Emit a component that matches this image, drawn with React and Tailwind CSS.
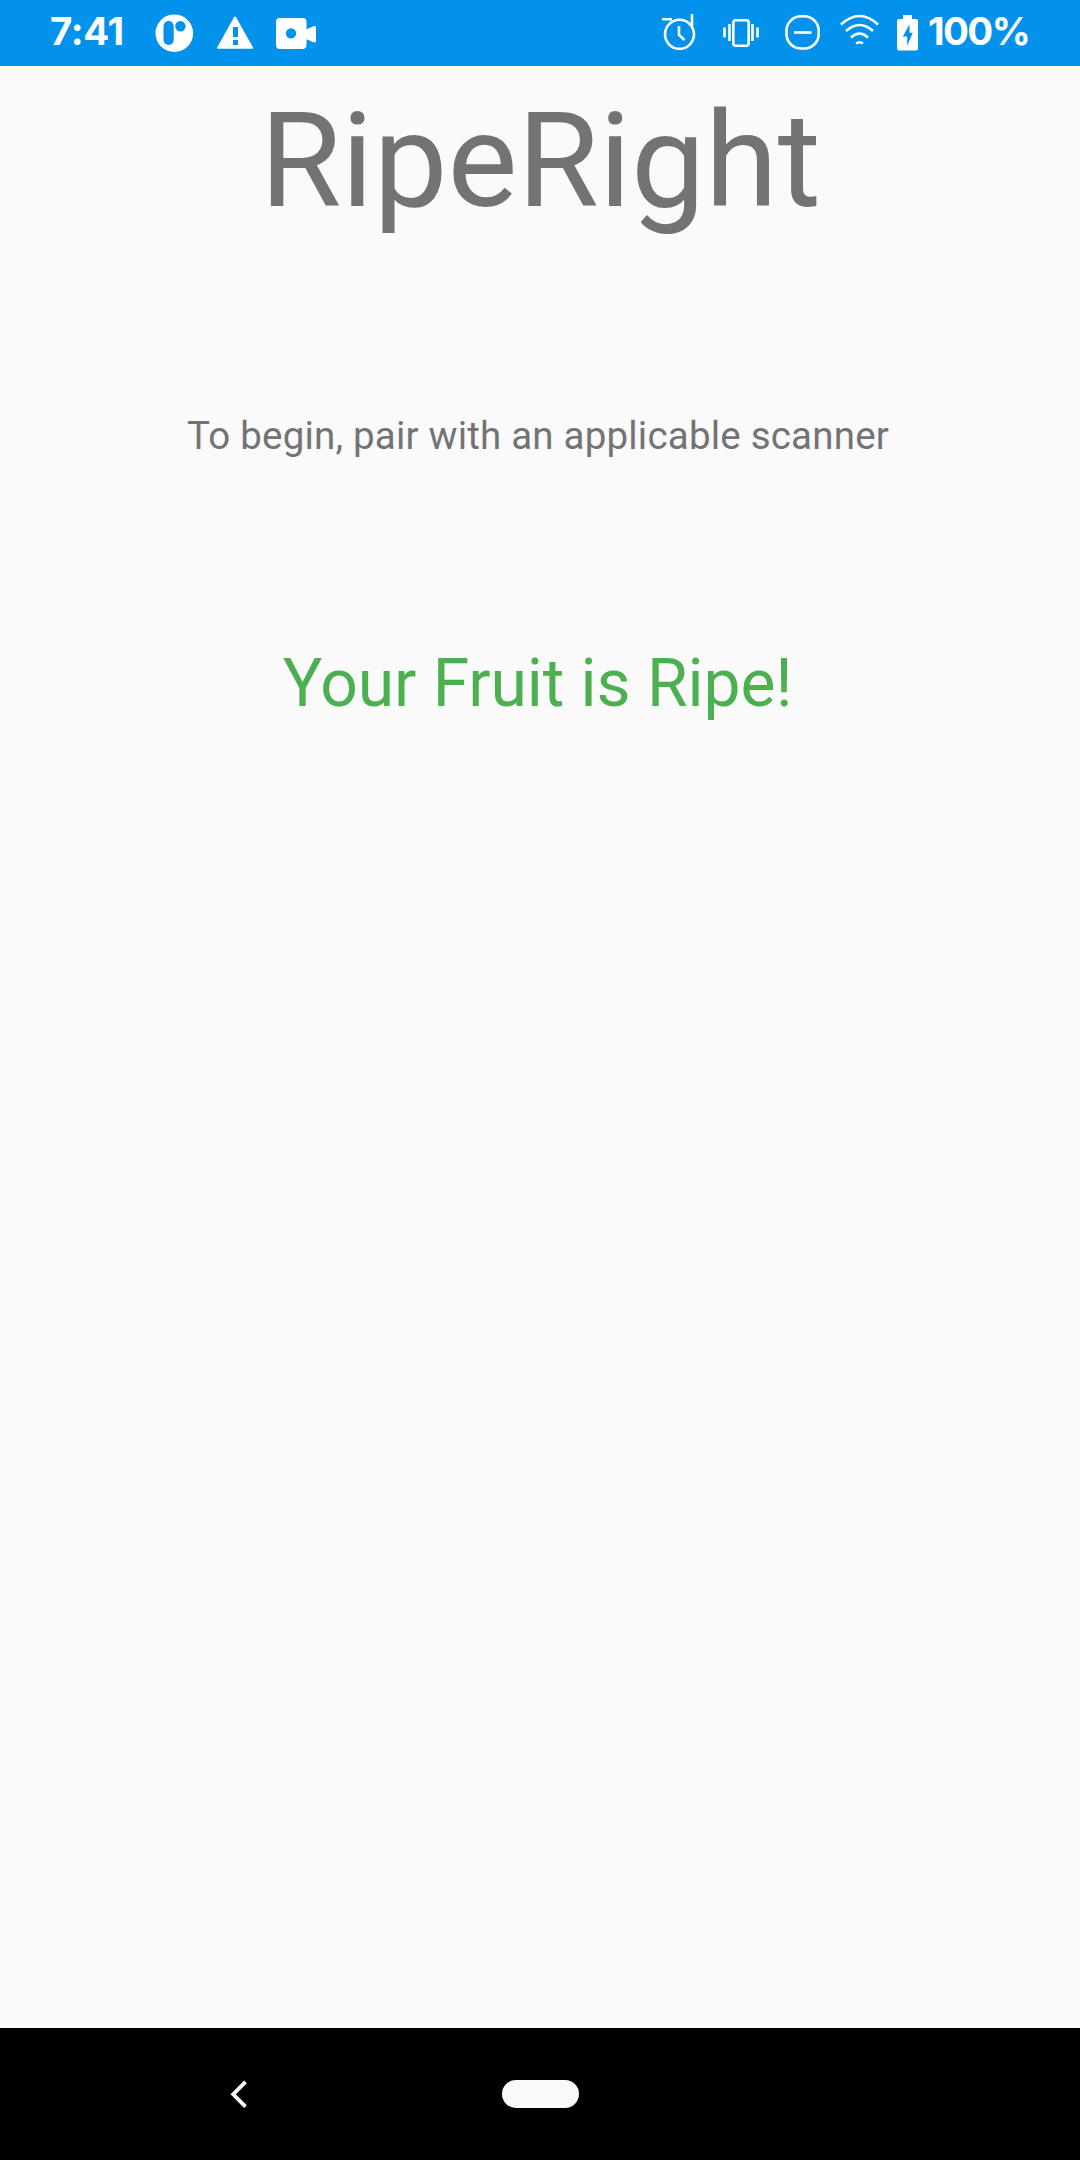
function StatusBar() {
  return (
    <header className="flex h-[66px] items-start bg-[#0292ec] pl-[50px] text-white">
      <span className="w-[102px] pt-[7px] font-[Inter] text-[38.5px] font-bold leading-[48px] tracking-[-0.3px]">7:41</span>
      <svg className="h-[66px] w-[188px]" viewBox="152 0 188 66" fill="currentColor">
        <circle cx="174.3" cy="33.2" r="18.8" />
        <rect x="163.500" y="21" width="10.2" height="24" rx="5.1" fill="#0292ec" />
        <circle cx="180.400" cy="26.3" r="5.2" fill="#0292ec" />
        <path d="M236 17.3 253 47.600Q253.400 48.8 252 48.8H218Q216.600 48.8 217.200 47.5L234 17.3Q235 15.8 236 17.3Z" />
        <path d="M233 27h5v10h-5zM233 40h5v5h-5z" fill="#0292ec" />
        <path fillRule="evenodd" d="M280 18h22.500a4 4 0 0 1 4 4v7.300l7-3h2.500v16h-2.500l-7-3v5.700a4 4 0 0 1-4 4H280a4 4 0 0 1-4-4V22a4 4 0 0 1 4-4ZM291 28.200a5.200 5.200 0 1 0 0 10.400a5.200 5.200 0 1 0 0-10.400Z" />
      </svg>
      <svg className="ml-auto h-[66px] w-[270px] shrink-0" viewBox="658 0 270 66" fill="none" stroke="currentColor" strokeWidth="2.600">
        <circle cx="679.500" cy="34.300" r="14.500" />
        <path d="M679 26v9l5.500 5M662 19.300h10M692 14v12" />
        <rect x="733.300" y="20.200" width="15.400" height="25.600" rx="2.500" />
        <path d="M729.500 24v17M724.500 27.500v10M752.500 24v17M757.500 27.500v10" />
        <rect x="786.500" y="16.300" width="32.200" height="32.200" rx="14.500" />
        <path d="M794 32.500h17.500" />
        <path d="M841 24.500Q859.500 7.500 878 24.500M846 31Q859.500 19 873 31M851 37.500Q859.500 29.500 868 37.500M856 43.500Q859.500 41 863 43.500" />
        <path stroke="none" fill="currentColor" d="M903 15h9v4h4q2 0 2 2v27.500q0 2-2 2h-17q-2 0-2-2V21q0-2 2-2h4Z" />
        <path stroke="none" fill="#0292ec" d="M909.500 24.500 902.800 36.500h4.400V45.500L912.800 32.800H909.500Z" />
      </svg>
      <span className="w-[152px] shrink-0 whitespace-nowrap pt-[7px] font-[Inter] text-[38.5px] font-bold leading-[48px] tracking-[-1.6px]">100%</span>
    </header>
  );
}

function NavigationBar() {
  return (
    <nav className="flex h-[132px] items-center bg-black pl-[230px]">
      <svg className="h-[28px] w-[18px]" viewBox="0 0 18 28" fill="none" stroke="#fafafa" strokeWidth="3.800">
        <path d="M15.500 1.900 3.200 14.300 15.500 26.700" />
      </svg>
      <div className="ml-[254px] h-[28.500px] w-[77px] rounded-full bg-[#fafafa]" />
    </nav>
  );
}

export default function App() {
  return (
    <div className="flex h-[2160px] w-[1080px] flex-col overflow-hidden bg-[#fafafa] font-[Roboto] text-[#737373]">
      <StatusBar />
      <main className="flex flex-1 flex-col items-center">
        <h1 className="mt-[18px] whitespace-nowrap pl-px text-[132px] leading-[155px]">RipeRight</h1>
        <p className="mt-[174px] whitespace-nowrap pr-[4px] text-[38.5px] leading-[45px] tracking-[0.2px]">To begin, pair with an applicable scanner</p>
        <p className="mt-[187px] whitespace-nowrap pr-[5px] text-[66px] leading-[77px] tracking-[-0.07px] text-[#4caf50]">Your Fruit is Ripe!</p>
      </main>
      <NavigationBar />
    </div>
  );
}
